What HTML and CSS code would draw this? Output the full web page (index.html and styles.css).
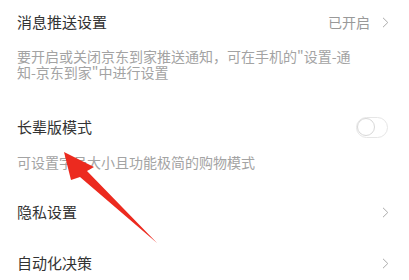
FILE: index.html
```html
<!DOCTYPE html>
<html lang="zh-CN">
<head>
  <meta charset="UTF-8">
  <meta name="viewport" content="width=device-width, initial-scale=1.0">
  <title>设置</title>
  <link rel="stylesheet" href="styles.css">
</head>
<body>
  <div class="settings">
    <div class="item">
      <div class="row">
        <span class="title">消息推送设置</span>
        <span class="extra">已开启<svg class="chevron" viewBox="0 0 7 11"><path d="M1 0.8 L5.8 5.5 L1 10.2" /></svg></span>
      </div>
      <p class="desc">要开启或关闭京东到家推送通知，可在手机的"设置-通知-京东到家"中进行设置</p>
    </div>

    <div class="item item-mode">
      <div class="row">
        <span class="title">长辈版模式</span>
        <span class="switch"><span class="knob"></span></span>
      </div>
      <p class="desc">可设置字号大小且功能极简的购物模式</p>
    </div>

    <div class="item item-privacy">
      <div class="row">
        <span class="title">隐私设置</span>
        <svg class="chevron" viewBox="0 0 7 11"><path d="M1 0.8 L5.8 5.5 L1 10.2" /></svg>
      </div>
    </div>

    <div class="item item-auto">
      <div class="row">
        <span class="title">自动化决策</span>
        <svg class="chevron" viewBox="0 0 7 11"><path d="M1 0.8 L5.8 5.5 L1 10.2" /></svg>
      </div>
    </div>
  </div>

  <svg class="arrow" viewBox="0 0 409 280">
    <polygon points="64,152 94,167 87,171 157,243 80,177 71,180" />
  </svg>
</body>
</html>
```

FILE: styles.css
```css
body {
  margin: 0;
  padding: 0;
  background: #fff;
  font-family: "Noto Sans CJK SC", "Noto Sans", sans-serif;
  color: #333;
  width: 409px;
  height: 280px;
  overflow: hidden;
  position: relative;
}
.settings {
  padding: 11px 20px 0 17px;
}
.row {
  display: flex;
  align-items: center;
  justify-content: space-between;
  height: 22px;
}
.title {
  font-size: 15px;
  line-height: 22px;
  color: #333;
}
.extra {
  display: flex;
  align-items: center;
  font-size: 14px;
  color: #999;
  gap: 12px;
}
.chevron {
  width: 7px;
  height: 11px;
  fill: none;
  stroke: #aaa;
  stroke-width: 1;
}
.desc {
  margin: 15px 0 0;
  font-size: 14px;
  line-height: 16px;
  color: #a3a3a3;
  width: 350px;
}
.item-mode {
  margin-top: 36px;
}
.item-mode .desc {
  margin-top: 16px;
}
.item-privacy {
  margin-top: 31px;
}
.item-auto {
  margin-top: 29px;
}
.switch {
  width: 30px;
  height: 19px;
  border: 1px solid #e6e6e6;
  border-radius: 11px;
  margin-right: 1px;
  display: flex;
  align-items: center;
}
.knob {
  width: 18px;
  height: 18px;
  border: 1px solid #d8d8d8;
  border-radius: 50%;
  box-sizing: border-box;
  background: #fff;
}
.arrow {
  position: absolute;
  left: 0;
  top: 0;
  width: 409px;
  height: 280px;
  fill: #ec2a1f;
}
```
